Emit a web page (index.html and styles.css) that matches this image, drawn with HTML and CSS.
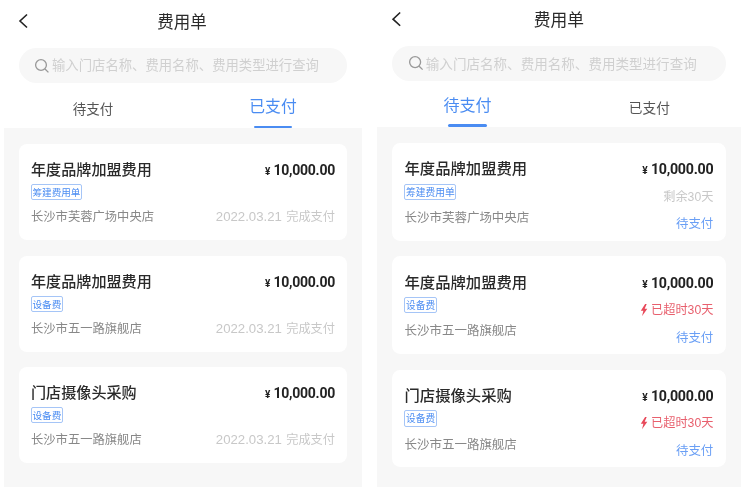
FILE: index.html
```html
<!DOCTYPE html>
<html lang="zh-CN">
<head>
<meta charset="utf-8">
<title>费用单</title>
<link rel="stylesheet" href="styles.css">
</head>
<body>
<div class="app">
  <section class="panel panel-paid">
    <header class="header">
      <svg class="back" viewBox="0 0 12 16" width="12" height="16"><path d="M10 1.5 3 8l7 6.5" fill="none" stroke="#222" stroke-width="1.6"/></svg>
      <h1 class="title">费用单</h1>
    </header>
    <div class="search">
      <svg class="search-icon" viewBox="0 0 16 16" width="16" height="16"><circle cx="7" cy="7" r="5.4" fill="none" stroke="#999" stroke-width="1.3"/><path d="m11 11 3.4 3.4" stroke="#999" stroke-width="1.3" fill="none"/></svg>
      <span class="placeholder">输入门店名称、费用名称、费用类型进行查询</span>
    </div>
    <nav class="tabs">
      <div class="tab">待支付</div>
      <div class="tab active">已支付</div>
    </nav>
    <div class="list">
      <article class="card">
        <div class="main"><div class="name">年度品牌加盟费用</div><span class="tag">筹建费用单</span><div class="addr">长沙市芙蓉广场中央店</div></div>
        <div class="side"><div class="amount"><span class="yen">¥</span>10,000.00</div><div class="date"><span class="day">2022.03.21</span> 完成支付</div></div>
      </article>
      <article class="card">
        <div class="main"><div class="name">年度品牌加盟费用</div><span class="tag">设备费</span><div class="addr">长沙市五一路旗舰店</div></div>
        <div class="side"><div class="amount"><span class="yen">¥</span>10,000.00</div><div class="date"><span class="day">2022.03.21</span> 完成支付</div></div>
      </article>
      <article class="card">
        <div class="main"><div class="name">门店摄像头采购</div><span class="tag">设备费</span><div class="addr">长沙市五一路旗舰店</div></div>
        <div class="side"><div class="amount"><span class="yen">¥</span>10,000.00</div><div class="date"><span class="day">2022.03.21</span> 完成支付</div></div>
      </article>
    </div>
  </section>
  <section class="panel panel-pending">
    <header class="header">
      <svg class="back" viewBox="0 0 12 16" width="12" height="16"><path d="M10 1.5 3 8l7 6.5" fill="none" stroke="#222" stroke-width="1.6"/></svg>
      <h1 class="title">费用单</h1>
    </header>
    <div class="search">
      <svg class="search-icon" viewBox="0 0 16 16" width="16" height="16"><circle cx="7" cy="7" r="5.4" fill="none" stroke="#999" stroke-width="1.3"/><path d="m11 11 3.4 3.4" stroke="#999" stroke-width="1.3" fill="none"/></svg>
      <span class="placeholder">输入门店名称、费用名称、费用类型进行查询</span>
    </div>
    <nav class="tabs">
      <div class="tab active">待支付</div>
      <div class="tab">已支付</div>
    </nav>
    <div class="list">
      <article class="card">
        <div class="main"><div class="name">年度品牌加盟费用</div><span class="tag">筹建费用单</span><div class="addr">长沙市芙蓉广场中央店</div></div>
        <div class="side"><div class="amount"><span class="yen">¥</span>10,000.00</div><div class="status">剩余30天</div><div class="action">待支付</div></div>
      </article>
      <article class="card">
        <div class="main"><div class="name">年度品牌加盟费用</div><span class="tag">设备费</span><div class="addr">长沙市五一路旗舰店</div></div>
        <div class="side"><div class="amount"><span class="yen">¥</span>10,000.00</div><div class="status overdue"><svg class="bolt" viewBox="0 0 8 12" width="8" height="12"><path d="M5 0 .8 6.6h2.5L2 12l5.2-7.4H4.6L6.6 0z" fill="#e8495a"/></svg>已超时30天</div><div class="action">待支付</div></div>
      </article>
      <article class="card">
        <div class="main"><div class="name">门店摄像头采购</div><span class="tag">设备费</span><div class="addr">长沙市五一路旗舰店</div></div>
        <div class="side"><div class="amount"><span class="yen">¥</span>10,000.00</div><div class="status overdue"><svg class="bolt" viewBox="0 0 8 12" width="8" height="12"><path d="M5 0 .8 6.6h2.5L2 12l5.2-7.4H4.6L6.6 0z" fill="#e8495a"/></svg>已超时30天</div><div class="action">待支付</div></div>
      </article>
    </div>
  </section>
</div>
</body>
</html>
```
FILE: styles.css
```css
* { box-sizing: border-box; }
html, body { margin: 0; height: 100%; overflow: hidden; background: #fff; }
body { font-family: "Noto Sans CJK SC", "Liberation Sans", sans-serif; color: #222; }
.app { display: flex; gap: 7px; height: 487px; filter: blur(0.3px); }
.panel { width: 366px; display: flex; flex-direction: column; flex: none; }
.panel-pending { zoom: 1.016; height: 480px; }
.header { height: 41px; display: flex; align-items: center; justify-content: center; padding-right: 2px; position: relative; }
.panel-pending .header { height: 37px; padding-right: 0; }
.back { position: absolute; left: 17px; top: 50%; margin-top: -8px; }
.title { margin: 0; font-size: 16.5px; font-weight: 400; color: #2a2a2a; line-height: 22px; }
.search { height: 35px; margin: 7px 19px 0; border-radius: 18px; background: #f7f7f7; display: flex; align-items: center; padding-left: 15px; }
.panel-pending .search { margin-top: 8px; }
.search-icon { flex: none; margin-right: 2px; }
.placeholder { font-size: 13.35px; color: #d0d0d0; white-space: nowrap; line-height: 18px; padding-bottom: 1px; }
.tabs { height: 45px; display: grid; grid-template-columns: 186px 174px; }
.panel-pending .tabs { grid-template-columns: 186px 172px; }
.tab { text-align: center; font-size: 13.5px; line-height: 18px; color: #555; padding-top: 16px; position: relative; }
.tab.active { font-size: 15.8px; line-height: 22px; color: #4a8cf2; padding-top: 12px; }
.tab.active::after { content: ""; position: absolute; left: 50%; margin-left: -19px; bottom: 0; width: 38px; height: 2.5px; border-radius: 2px; background: #4a8cf2; }
.list { flex: 1; margin: 0 4px; padding: 16px 15px 0; background: #f7f7f7; display: flex; flex-direction: column; gap: 15.5px; }
.card { height: 96px; background: #fff; border-radius: 8px; padding: 16px 12px 7px; display: flex; justify-content: space-between; }
.main { display: flex; flex-direction: column; align-items: flex-start; }
.name { font-size: 15.1px; line-height: 17px; font-weight: 500; color: #2a2a2a; white-space: nowrap; }
.tag { margin-top: 7px; height: 16px; padding: 0 0.5px; border: 1px solid #a5c5f7; border-radius: 2px; font-size: 9.6px; line-height: 14px; color: #4a8cf2; white-space: nowrap; }
.addr { margin-top: 7px; font-size: 12.3px; line-height: 18px; color: #888; }
.panel-pending .addr { margin-top: 8px; }
.side { display: flex; flex-direction: column; align-items: flex-end; }
.amount { font-family: Roboto, "Liberation Sans", sans-serif; font-size: 14px; letter-spacing: -0.25px; line-height: 20px; font-weight: 700; color: #222; white-space: nowrap; }
.yen { font-size: 10px; margin-right: 3.5px; }
.date { margin-top: 26px; font-family: "Liberation Sans", "Noto Sans CJK SC", sans-serif; font-size: 12.2px; line-height: 18px; color: #c8c8c8; white-space: nowrap; }
.day { font-size: 13.2px; margin-right: 1px; }
.status { margin-top: 6px; font-size: 12px; line-height: 18px; color: #c8c8c8; display: flex; align-items: center; font-family: "Liberation Sans", "Noto Sans CJK SC", sans-serif; }
.status.overdue { color: #e8606e; }
.bolt { margin-right: 3px; }
.action { margin-top: 8px; font-size: 12.3px; line-height: 18px; color: #6a9ff5; }
```
